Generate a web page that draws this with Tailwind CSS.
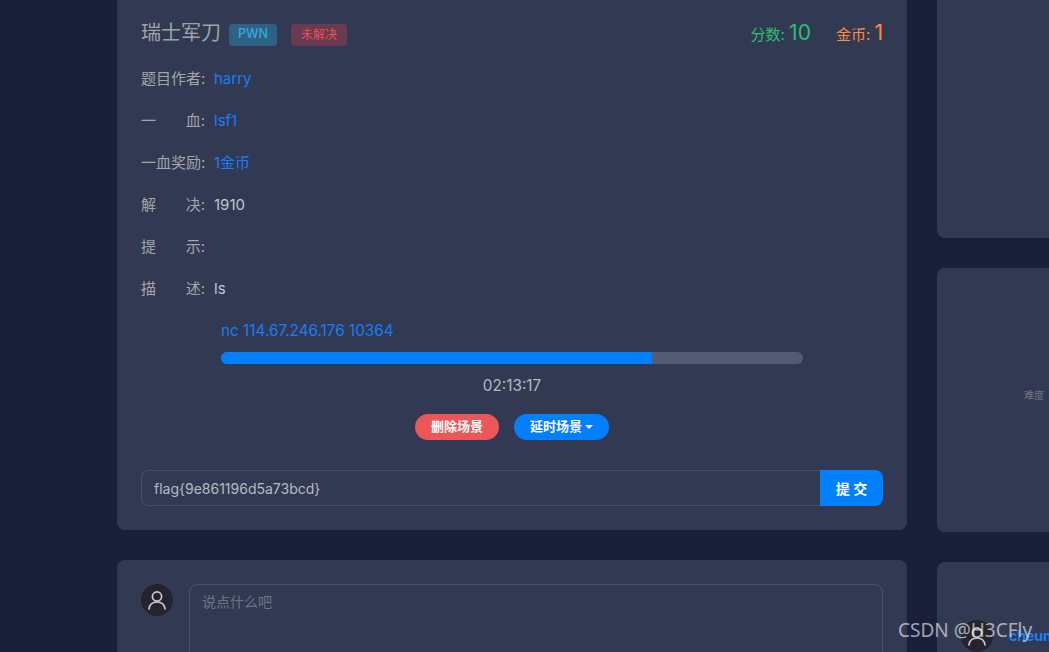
<!DOCTYPE html>
<html lang="en">
<head>
    <meta charset="UTF-8">
    <title>瑞士军刀</title>
    <script src="https://cdn.jsdelivr.net/npm/@tailwindcss/browser@4"></script>
</head>
<body class="relative h-[652px] overflow-hidden bg-[#1a203a] text-[15px] text-[#c2c6cc] font-['Inter','Noto_Sans_CJK_SC',sans-serif]">
    <div class="flex gap-[30px] pl-[117px]">
        <!-- Main column -->
        <div class="w-[790px] shrink-0 -mt-[8px]">
            <div class="bg-[#323a53] rounded-lg p-6 h-[538px]">
                <!-- Title row -->
                <div class="flex items-center justify-between h-8 mb-[10px] pt-[1px]">
                    <div class="flex items-center">
                        <span class="text-[20px] text-[#9fa2aa]">瑞士军刀</span>
                        <span class="ml-[8px] mt-[4px] w-12 h-[22px] flex items-center justify-center rounded bg-[#2e6285] text-[#3ba7d9] text-[12.5px] font-medium">PWN</span>
                        <span class="ml-[14px] mt-[4px] w-14 h-[22px] flex items-center justify-center rounded bg-[#6a3b50] text-[#e8505b] text-xs">未解决</span>
                    </div>
                    <div class="flex items-baseline">
                        <span class="text-[#2ac06f]">分数: <span class="text-[21px]">10</span></span>
                        <span class="ml-[25px] text-[#fd8c3e]">金币: <span class="text-[21px]">1</span></span>
                    </div>
                </div>

                <!-- Info rows -->
                <div class="flex items-center h-[42px]">
                    <span class="w-[64px] text-[#a3a5a9] whitespace-nowrap">题目作者:</span>
                    <span class="ml-[9px] text-[#1a7cf5]">harry</span>
                </div>
                <div class="flex items-center h-[42px]">
                    <span class="w-[64px] flex justify-between text-[#a3a5a9]"><span>一</span><span>血:</span></span>
                    <span class="ml-[9px] text-[#1a7cf5]">lsf1</span>
                </div>
                <div class="flex items-center h-[42px]">
                    <span class="w-[64px] text-[#a3a5a9] whitespace-nowrap">一血奖励:</span>
                    <span class="ml-[9px] text-[#1a7cf5]">1金币</span>
                </div>
                <div class="flex items-center h-[42px]">
                    <span class="w-[64px] flex justify-between text-[#a3a5a9]"><span>解</span><span>决:</span></span>
                    <span class="ml-[9px]">1910</span>
                </div>
                <div class="flex items-center h-[42px]">
                    <span class="w-[64px] flex justify-between text-[#a3a5a9]"><span>提</span><span>示:</span></span>
                </div>
                <div class="flex items-center h-[42px]">
                    <span class="w-[64px] flex justify-between text-[#a3a5a9]"><span>描</span><span>述:</span></span>
                    <span class="ml-[9px]">ls</span>
                </div>

                <!-- Scene -->
                <div class="ml-[80px] mr-[80px] mt-[11px]">
                    <div class="h-5 leading-5 text-[15.3px] text-[#1a7cf5]">nc 114.67.246.176 10364</div>
                    <div class="mt-[11px] h-3 rounded-md bg-[#535b75] overflow-hidden">
                        <div class="h-full w-[74%] bg-[#0080ff]"></div>
                    </div>
                    <div class="mt-[12px] h-5 leading-5 text-center text-[15.3px] text-[#b6b9be]">02:13:17</div>
                </div>
                <div class="flex justify-center gap-[15px] mt-[18px] text-[13px] font-bold text-white">
                    <span class="w-[84px] h-[26px] flex items-center justify-center rounded-full bg-[#ec5658]">删除场景</span>
                    <span class="w-[95px] h-[26px] flex items-center justify-center rounded-full bg-[#0080ff]">延时场景<span class="ml-[3px] border-x-[4px] border-t-[4px] border-x-transparent border-t-white"></span></span>
                </div>

                <!-- Flag input -->
                <div class="flex mt-[30px] h-9">
                    <div class="flex-1 flex items-center pl-3 border border-[#495068] border-r-0 rounded-l-lg text-[14px] text-[#b6bac2]">flag{9e861196d5a73bcd}</div>
                    <div class="w-[63px] flex items-center justify-center rounded-r-lg bg-[#0080ff] text-white text-[14px] font-bold">提 交</div>
                </div>
            </div>

            <!-- Comment box -->
            <div class="mt-[30px] bg-[#323a53] rounded-lg p-6 h-[300px] flex gap-4">
                <div class="w-8 h-8 shrink-0 rounded-full bg-[#24232f] flex items-center justify-center">
                    <svg viewBox="0 0 24 24" class="w-[24px] h-[24px]" fill="none" stroke="#c9c9cc" stroke-width="1.7" stroke-linecap="round"><circle cx="12" cy="8.5" r="4.6"/><path d="M4 21c.6-4.6 3.6-7 8-7s7.4 2.4 8 7"/></svg>
                </div>
                <div class="flex-1 h-[120px] border border-[#495068] rounded-lg px-3 py-[6px] text-[14px] text-[#6e7484]">说点什么吧</div>
            </div>
        </div>

        <!-- Side column -->
        <div class="flex-1 -mt-[8px] -mr-4">
            <div class="bg-[#323a53] rounded-l-lg h-[246px]"></div>
            <div class="mt-[30px] bg-[#323a53] rounded-l-lg h-[264px] relative">
                <span class="absolute left-[87px] top-[120px] text-[10px] text-[#74757c]">难度</span>
            </div>
            <div class="mt-[30px] bg-[#323a53] rounded-l-lg h-[200px] pl-6 pt-[58px] flex items-start gap-[16px]">
                <div class="w-8 h-8 shrink-0 rounded-full bg-[#24232f] flex items-center justify-center">
                    <svg viewBox="0 0 24 24" class="w-[24px] h-[24px]" fill="none" stroke="#c9c9cc" stroke-width="1.7" stroke-linecap="round"><circle cx="12" cy="8.5" r="4.6"/><path d="M4 21c.6-4.6 3.6-7 8-7s7.4 2.4 8 7"/></svg>
                </div>
                <span class="text-[#1a7cf5] font-bold text-[14px] leading-[20px] mt-[6px] whitespace-nowrap">cheun</span>
            </div>
        </div>
    </div>

    <!-- Watermark -->
    <div class="absolute left-[898px] top-[616px] text-[19px] leading-7 text-white/60 font-['Noto_Sans',sans-serif] whitespace-nowrap">CSDN @H3CFly</div>
</body>
</html>
